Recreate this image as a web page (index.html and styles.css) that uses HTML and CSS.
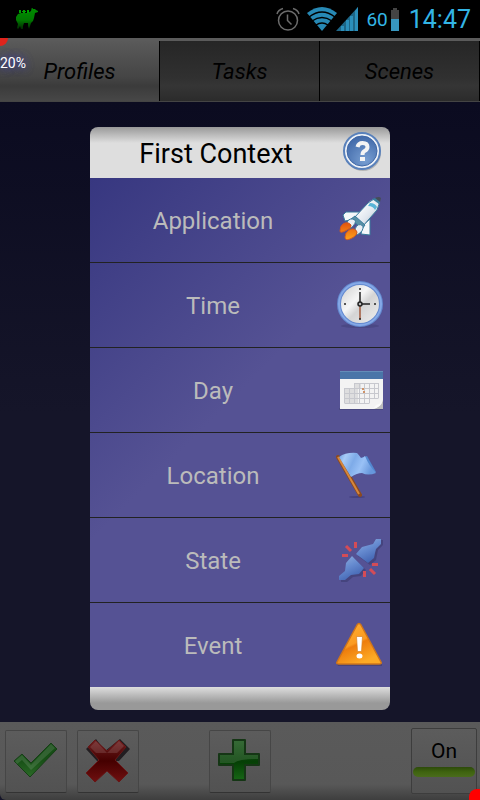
FILE: index.html
```html
<!DOCTYPE html>
<html lang="en">
<head>
  <meta charset="UTF-8">
  <meta name="viewport" content="width=device-width, initial-scale=1">
  <title>First Context</title>
  <link rel="stylesheet" href="styles.css">
</head>
<body>
  <!-- Status bar -->
  <header class="status-bar">
    <svg class="llama" width="22" height="22" viewBox="0 0 22 22" aria-hidden="true">
      <defs>
        <linearGradient id="llamaFill" x1="0" y1="0" x2="0" y2="1">
          <stop offset="0" stop-color="#009000"/>
          <stop offset="0.6" stop-color="#007800"/>
          <stop offset="1" stop-color="#002800"/>
        </linearGradient>
      </defs>
      <path fill="url(#llamaFill)" d="M17 1l2 0 1 1 2 1 0 1-3 1-1 5-1 3-2 2-1 3-1 3-1-3 0-3-4 0-1 3 0 3-2 0-1-3-1 2-1 1-1-1 1-4-2-4 0-3 2-3 3-1 7 0 3-2 1-4z"/>
      <path fill="#00a000" d="M3 2h2v3H3zM6 3h1v1H6zM7 2h2v3H7zM9 3h1v1H9zM11 2h2v3h-2z"/>
    </svg>
    <div class="status-icons">
      <svg class="alarm" width="24" height="24" viewBox="0 0 24 24" fill="none" stroke="#6c6c6c" stroke-width="1.500" aria-hidden="true">
        <circle cx="12" cy="13.500" r="9.500"/>
        <path d="M11.500 7.500v6l4 4M1 7q1-4 6-5.500M23 7q-1-4-6-5.500"/>
      </svg>
      <svg width="52" height="24" viewBox="0 0 52 24" aria-hidden="true">
        <path fill="#2789b5" d="M0 6q15-12 30 0L15 24z"/>
        <g fill="none" stroke="#000" stroke-width="1.500">
          <path d="M2 10q13-10 26 0"/>
          <path d="M5 14q10-7 20 0"/>
          <path d="M9 18q6-4 12 0"/>
        </g>
        <path fill="#1d6687" d="M29 24L51 0v24z"/>
        <path fill="#2b8fbb" d="M34 19h3v5h-3zM39 13h3v11h-3zM43 9h3v15h-3zM48 4l3-4v24h-3z"/>
      </svg>
      <span class="battery-text">60</span>
      <svg class="battery" width="8" height="23" viewBox="0 0 8 23" aria-hidden="true">
        <path fill="#444" d="M2 0h4v2h2v9H0V2h2z"/>
        <path fill="#3796bf" d="M0 11h8v12H0z"/>
      </svg>
      <time class="clock">14:47</time>
    </div>
  </header>

  <!-- Tabs -->
  <nav class="tabs">
    <button class="tab tab-active" type="button">Profiles</button>
    <button class="tab" type="button">Tasks</button>
    <button class="tab" type="button">Scenes</button>
    <span class="corner corner-top"></span>
    <span class="usage">20%</span>
  </nav>

  <main class="content"></main>

  <!-- Bottom toolbar -->
  <footer class="toolbar">
    <div class="toolbar-left">
      <button class="tool" type="button" aria-label="Accept">
        <svg width="46" height="46" viewBox="0 0 46 46">
          <defs>
            <linearGradient id="checkFill" x1="0" y1="0" x2="0" y2="1">
              <stop offset="0" stop-color="#154b15"/>
              <stop offset="0.500" stop-color="#174f16"/>
              <stop offset="1" stop-color="#2b6a27"/>
            </linearGradient>
          </defs>
          <path fill="url(#checkFill)" stroke="#173f17" stroke-linejoin="round" d="M1 23l8-7 9 9L38 5l6 6-27 28z"/>
          <path fill="#fff" opacity="0.120" d="M2 23l7-6 9 10L38 6l4 4-24 22L9 22l-5 4z"/>
        </svg>
      </button>
      <button class="tool" type="button" aria-label="Cancel">
        <svg width="46" height="46" viewBox="0 0 46 46">
          <defs>
            <linearGradient id="crossFill" x1="0" y1="0" x2="0" y2="1">
              <stop offset="0" stop-color="#6d2020"/>
              <stop offset="0.500" stop-color="#450000"/>
              <stop offset="1" stop-color="#701010"/>
            </linearGradient>
          </defs>
          <path fill="#221d20" d="M1 11L11 1l9 12L35 1l10 10-11 12H12z"/>
          <path fill="url(#crossFill)" stroke="#671616" stroke-linejoin="round" d="M3 9l7-7 12 11L34 2l7 7-11 13 13 13-9 9-12-11-12 11-9-9 13-13z"/>
          <path fill="#fff" opacity="0.120" d="M5 9l6-6 11 12L34 3l5 5-7 7H11z"/>
        </svg>
      </button>
    </div>
    <button class="tool" type="button" aria-label="Add">
      <svg width="46" height="46" viewBox="0 0 46 46">
        <defs>
          <linearGradient id="plusFill" x1="0" y1="0" x2="0" y2="1">
            <stop offset="0" stop-color="#1b561b"/>
            <stop offset="0.550" stop-color="#053f05"/>
            <stop offset="1" stop-color="#176716"/>
          </linearGradient>
        </defs>
        <path fill="url(#plusFill)" stroke="#153615" stroke-width="2" stroke-linejoin="round" d="M16 2h12v14h14v11H28v15H16V27H2V16h14z"/>
        <path fill="#fff" opacity="0.120" d="M17 3h10v14h14v4q-19 0-24 4H3v-8h14z"/>
      </svg>
    </button>
    <button class="tool tool-toggle" type="button" aria-pressed="true">
      On
      <span class="toggle-light"></span>
    </button>
    <span class="corner corner-bottom"></span>
  </footer>

  <!-- Context menu -->
  <div class="overlay">
    <section class="dialog" role="dialog" aria-labelledby="dialogTitle">
      <div class="dialog-header">
        <h1 class="dialog-title" id="dialogTitle">First Context</h1>
        <button class="help" type="button" aria-label="Help">
          <svg width="40" height="40" viewBox="0 0 40 40">
            <defs>
              <radialGradient id="helpFill" cx="0.600" cy="0.800" r="0.800">
                <stop offset="0" stop-color="#789fd2"/>
                <stop offset="1" stop-color="#4169a9"/>
              </radialGradient>
            </defs>
            <ellipse cx="21" cy="21" rx="18" ry="18" fill="#999" opacity="0.600"/>
            <circle cx="20" cy="19" r="18" fill="#eef2f8" stroke="#5981bb" stroke-width="2"/>
            <circle cx="20" cy="19" r="15" fill="url(#helpFill)" stroke="#4069a8"/>
            <path d="M15.500 15q1-4 5-4 5 0 5 4 0 2.500-3 4-2 1-2 4" fill="none" stroke="#f4f4f4" stroke-width="4"/>
            <path d="M18 25h5v4h-5z" fill="#f4f4f4"/>
          </svg>
        </button>
      </div>

      <div class="menu">
        <button class="menu-item" type="button">
          <span class="menu-label">Application</span>
          <svg width="48" height="48" viewBox="0 0 48 48" aria-hidden="true">
            <defs>
              <linearGradient id="rocketFill" x1="0" y1="0" x2="1" y2="1">
                <stop offset="0.200" stop-color="#fff"/>
                <stop offset="0.600" stop-color="#dfe6ee"/>
                <stop offset="1" stop-color="#8496ad"/>
              </linearGradient>
              <linearGradient id="flameFill" x1="0" y1="0" x2="0" y2="1">
                <stop offset="0" stop-color="#e3520d"/>
                <stop offset="1" stop-color="#ffa31a"/>
              </linearGradient>
            </defs>
            <g stroke="#397b9c" stroke-linejoin="round">
              <path fill="#f5f8fa" d="M24 16L10 16 7 19l2 6 10-2zM34 23v16l-9-1 2-9z"/>
              <path fill="url(#rocketFill)" d="M18 22L32 7q5-5 11-4 1 5-2 11L27 30z"/>
              <path fill="#5790a5" d="M19 20l10 9-3 4-11-10z"/>
              <path fill="#e8edf3" d="M11 26q3-5 8-2 2 3-5 9zM19 33q3-7 8-3 1 5-6 9z"/>
            </g>
            <path fill="#397f9f" d="M36 3q5-2 8 0 0 3-1 5z"/>
            <path fill="#58b4d7" d="M34 7q5 0 7 4l-2 3q-2-4-7-4z"/>
            <path fill="#454d58" d="M39 2q4-2 6 0l-1 4z"/>
            <path fill="url(#flameFill)" stroke="#d25a20" d="M7 28q5-3 8 1 1 3-4 5-7 4-7 1 0-5 3-7zM13 34q6-3 8 2 0 4-7 7-5 2-5-2 0-4 4-7z"/>
          </svg>
        </button>
        <button class="menu-item" type="button">
          <span class="menu-label">Time</span>
          <svg width="48" height="48" viewBox="0 0 48 48" aria-hidden="true">
            <defs>
              <linearGradient id="dialFill" x1="0" y1="0" x2="1" y2="1">
                <stop offset="0" stop-color="#c9c9c9"/>
                <stop offset="0.400" stop-color="#f6f6f6"/>
                <stop offset="0.550" stop-color="#d4d4d4"/>
                <stop offset="1" stop-color="#f2f2f2"/>
              </linearGradient>
            </defs>
            <ellipse cx="24" cy="45" rx="19" ry="2" fill="#3f3d75" opacity="0.500"/>
            <circle cx="24" cy="23" r="21" fill="url(#dialFill)" stroke="#6489cf" stroke-width="4"/>
            <circle cx="24" cy="23" r="21" fill="none" stroke="#85a9e7" stroke-width="2"/>
            <path stroke="#a0583b" stroke-width="1.500" d="M24 24v14"/>
            <path fill="none" stroke="#222" stroke-width="1.500" d="M24 11v12h10"/>
            <circle cx="24" cy="23" r="2" fill="#bbb" stroke="#222" stroke-width="1.500"/>
            <g fill="#222">
              <circle cx="24" cy="8" r="1"/>
              <circle cx="39" cy="23" r="1"/>
              <circle cx="24" cy="38" r="1"/>
              <circle cx="9" cy="23" r="1"/>
            </g>
          </svg>
        </button>
        <button class="menu-item" type="button">
          <span class="menu-label">Day</span>
          <svg width="48" height="48" viewBox="0 0 48 48" aria-hidden="true">
            <path fill="#454678" opacity="0.600" d="M3 42h44v2H3z"/>
            <path fill="#f3f3f3" d="M4 5h43v38H4z"/>
            <path fill="#4a75a8" d="M4 5h43v8H4z"/>
            <path fill="#638db8" d="M4 5h43v1H4z"/>
            <path fill="#dededf" d="M8 22h14v15H8zM18 17h7v5h-7z"/>
            <path fill="none" stroke="#c7c8ce" d="M18.500 17.500h24M8.500 22.500h34M8.500 27.500h34M8.500 32.500h34M8.500 37.500h25M8.500 22v15M13.500 22v15M18.500 17v20M23.500 17v20M28.500 17v20M33.500 17v20M38.500 17v15M42.500 17v15"/>
            <path fill="#ce9267" d="M26 22h2v2h-2zM27 25h2v2h-2z"/>
            <path fill="#bcbcbd" d="M47 34v9H37q7-2 10-9z"/>
            <path fill="#fafafa" d="M47 34q-2 4-7 5l-3 4q8-1 10-9z"/>
          </svg>
        </button>
        <button class="menu-item" type="button">
          <span class="menu-label">Location</span>
          <svg width="48" height="48" viewBox="0 0 48 48" aria-hidden="true">
            <defs>
              <linearGradient id="flagFill" x1="0" y1="0" x2="1" y2="0.300">
                <stop offset="0" stop-color="#6d9fe2"/>
                <stop offset="0.200" stop-color="#a7cbf7"/>
                <stop offset="0.450" stop-color="#7eabe8"/>
                <stop offset="0.700" stop-color="#99c1f6"/>
                <stop offset="1" stop-color="#6797dc"/>
              </linearGradient>
            </defs>
            <ellipse cx="21" cy="46" rx="8" ry="1" fill="#454280"/>
            <path stroke="#8d4a1f" stroke-width="4" stroke-linecap="round" d="M2 6l22 38"/>
            <path stroke="#d6873c" stroke-width="2" d="M2 6l21 37"/>
            <path fill="#5288d0" d="M25 7l6-2 9 16-10 2z"/>
            <path fill="url(#flagFill)" d="M3 6q7-5 18-4 2 2 4 5 2 0 4-2 4 10 11 17-8 3-14 0-5 0-11 4z"/>
          </svg>
        </button>
        <button class="menu-item" type="button">
          <span class="menu-label">State</span>
          <svg width="48" height="48" viewBox="0 0 48 48" aria-hidden="true">
            <defs>
              <linearGradient id="plugFill" x1="0" y1="0" x2="0.500" y2="1">
                <stop offset="0" stop-color="#93b1e0"/>
                <stop offset="0.500" stop-color="#668bd0"/>
                <stop offset="1" stop-color="#4264b2"/>
              </linearGradient>
            </defs>
            <g fill="#3b3c70" opacity="0.600">
              <path d="M22 20l5-7 11-3 4-6h5v5l-5 5-1 5-1 5-6 5z"/>
              <path d="M18 22l12 12-5 6-8 1-6 5H5v-4l6-5 1-8z"/>
            </g>
            <path fill="url(#plugFill)" d="M20 18l6-7 11-3 3-5h5v5l-5 5-1 4-1 5-6 5z"/>
            <path fill="url(#plugFill)" d="M16 20l12 12-5 6-8 1-6 5H3v-4l6-5 1-8z"/>
            <path stroke="#d44c57" stroke-width="3" d="M10 10l5 5M19.500 6v6M6 19.500h6M28.500 35v6M34 33l5 5M36 28.500h6"/>
          </svg>
        </button>
        <button class="menu-item" type="button">
          <span class="menu-label">Event</span>
          <svg width="48" height="48" viewBox="0 0 48 48" aria-hidden="true">
            <defs>
              <linearGradient id="warnFill" x1="0" y1="0" x2="0.500" y2="1">
                <stop offset="0" stop-color="#ffb331"/>
                <stop offset="0.550" stop-color="#fb9a20"/>
                <stop offset="0.600" stop-color="#ee7d0c"/>
                <stop offset="1" stop-color="#fdaa25"/>
              </linearGradient>
            </defs>
            <path fill="#494478" d="M1 43h45v2H2z"/>
            <path fill="url(#warnFill)" stroke="#ce751b" stroke-width="1.500" stroke-linejoin="round" d="M21 4q2-3 4 0l20 37q1 2-2 2H3q-3 0-2-2z"/>
            <path fill="#fff" stroke="#d98224" stroke-width="0.700" d="M20.500 15.500h6l-1 15h-4z"/>
            <ellipse cx="23.500" cy="35" rx="3" ry="2.500" fill="#fff"/>
          </svg>
        </button>
      </div>
      <div class="dialog-footer"></div>
    </section>
  </div>
</body>
</html>
```

FILE: styles.css
```css
* {
  box-sizing: border-box;
}

body {
  margin: 0;
  min-height: 100vh;
  display: flex;
  flex-direction: column;
  position: relative;
  background-color: #151529;
  font-family: Roboto, "Liberation Sans", sans-serif;
}

button {
  margin: 0;
  padding: 0;
  border: none;
  background: none;
  font-family: inherit;
  cursor: pointer;
}

svg {
  display: block;
  flex: none;
}

/* Status bar */
.status-bar {
  height: 38px;
  padding: 0 9px 0 16px;
  display: flex;
  align-items: center;
  justify-content: space-between;
  background-color: #000;
  color: #33b5e5;
}

.status-icons {
  display: flex;
  align-items: center;
  gap: 7px;
}

.battery-text {
  font-size: 19px;
  margin-right: -4px;
}

.clock {
  margin-left: 3px;
  font-size: 25px;
}

/* Tabs */
.tabs {
  position: relative;
  display: grid;
  grid-template-columns: repeat(3, 1fr);
  height: 64px;
  padding-top: 3px;
  background-color: #5b5b5b;
  border-bottom: 1px solid #444;
}

.tab {
  border-right: 1px solid #000;
  background: linear-gradient(#262626, #303030 60%, #353535 75%, #2b2b2b);
  color: #000;
  font-size: 22px;
  font-style: italic;
}

.tab-active {
  background: linear-gradient(#5a5a5a, #454545 60%, #3b3b3b 75%, #474747);
}

.usage {
  position: absolute;
  top: 16px;
  left: 0;
  color: #fff;
  font-size: 14px;
  line-height: 18px;
  text-shadow: 0 0 8px #4040a0, 0 0 8px #4040a0;
}

/* Red marks in the screen corners */
.corner {
  position: absolute;
  background-color: #f00;
}

.corner-top {
  top: 0;
  left: 0;
  width: 8px;
  height: 8px;
  background-color: #e0241c;
  border-bottom-right-radius: 8px;
}

.corner-bottom {
  right: 0;
  bottom: 0;
  width: 11px;
  height: 11px;
  border-top-left-radius: 8px;
}

.content {
  flex: 1;
  background: linear-gradient(#0b0b20, #151529 50%);
}

/* Bottom toolbar */
.toolbar {
  position: relative;
  display: grid;
  grid-template-columns: 1fr auto 1fr;
  align-items: center;
  height: 78px;
  padding: 0 3px;
  background: linear-gradient(#5a5a5a, #585858 80%, #3e3e3e);
  border-bottom-left-radius: 6px;
}

.toolbar-left {
  display: flex;
  gap: 10px;
  padding-left: 2px;
}

.tool {
  display: flex;
  align-items: center;
  justify-content: center;
  width: 62px;
  height: 63px;
  border: 1px solid #464646;
  border-bottom-color: #333;
  border-radius: 2px;
  background: linear-gradient(#5c5c5c, #525252);
}

.tool-toggle {
  justify-self: end;
  flex-direction: column;
  gap: 4px;
  width: 66px;
  height: 66px;
  padding-bottom: 6px;
  border: 1px solid #3d3d3d;
  color: #000;
  font-size: 21px;
}

.toggle-light {
  width: 62px;
  height: 10px;
  border-radius: 5px;
  background: linear-gradient(#2d4a0b, #3f640f 50%, #4a6b1c);
}

/* Dialog */
.overlay {
  position: absolute;
  inset: 38px 0 0;
  padding-bottom: 2px;
  display: flex;
  align-items: center;
  justify-content: center;
}

.dialog {
  width: 62.5%;
  min-width: 300px;
  max-width: 420px;
  border-radius: 8px;
  overflow: hidden;
}

.dialog-header {
  display: flex;
  align-items: center;
  height: 51px;
  padding-right: 8px;
  background: linear-gradient(#999, #dedede 16px);
}

.dialog-title {
  flex: 1;
  margin: 0;
  padding-top: 4px;
  color: #000;
  font-size: 27px;
  font-weight: 400;
  text-align: center;
}

.menu {
  background: linear-gradient(135deg, #373780, #555294 45%);
}

.menu-item {
  display: flex;
  align-items: center;
  width: 100%;
  height: 85px;
  padding-right: 6px;
  border-bottom: 1px solid #222;
}

.menu-item:last-child {
  height: 84px;
  border-bottom: none;
}

.menu-label {
  flex: 1;
  padding-top: 3px;
  color: #bbb;
  font-size: 24px;
  text-align: center;
}

.dialog-footer {
  height: 23px;
  background: linear-gradient(#dedede, #999 16px);
}
```
